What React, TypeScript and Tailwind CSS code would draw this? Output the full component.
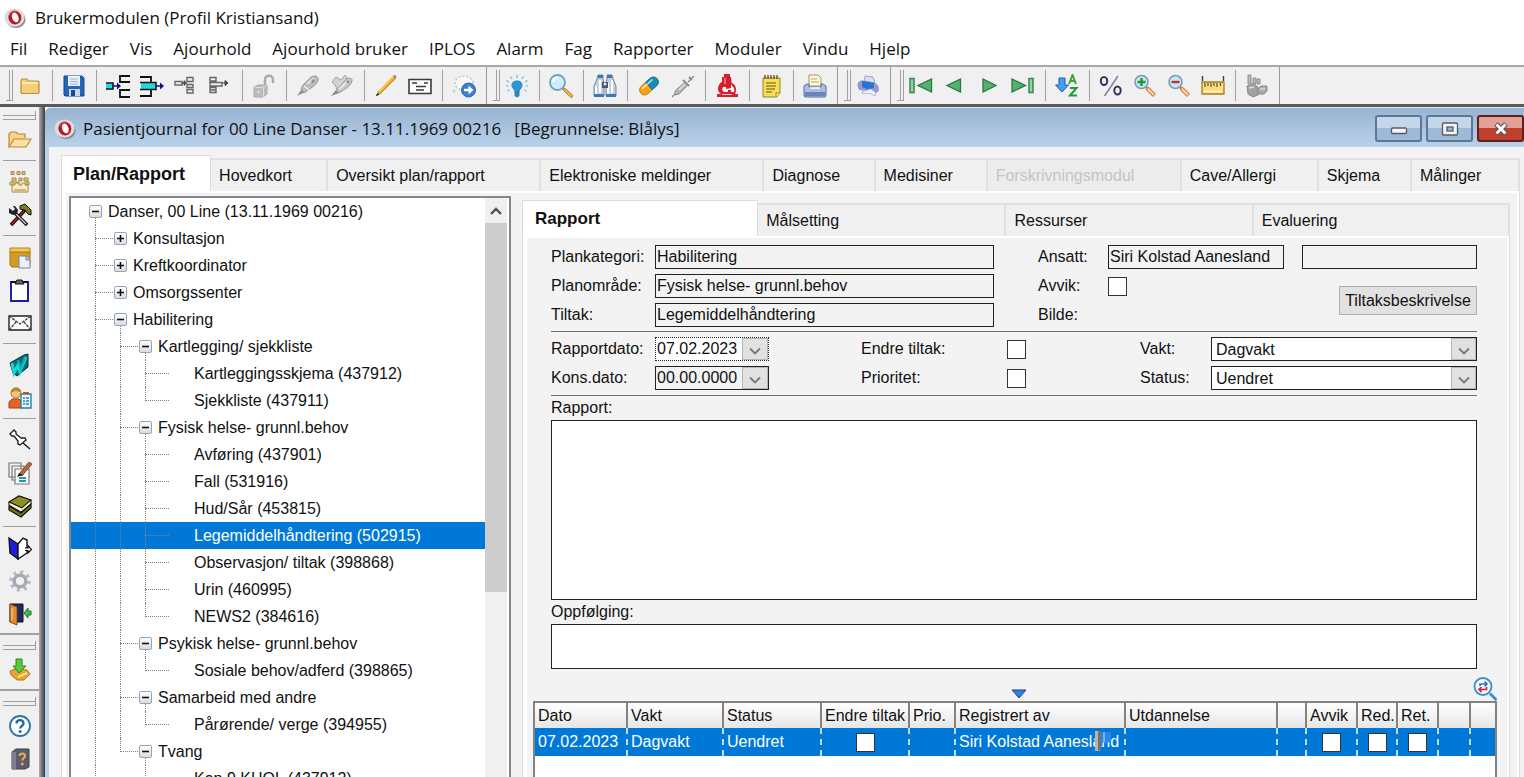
import React, { useState } from "react";

/* ---------- small drawings ---------- */

type IconProps = { children: React.ReactNode; size?: string };

function Icon({ children, size = "size-6" }: IconProps) {
  return (
    <svg viewBox="0 0 24 24" className={`${size} shrink-0`} fill="none" aria-hidden="true">
      {children}
    </svg>
  );
}

function Logo() {
  return (
    <svg viewBox="0 0 24 24" className="size-[22px] shrink-0" aria-hidden="true">
      <ellipse cx="13" cy="13.500" rx="10.500" ry="9.500" fill="#8a8a8a" />
      <ellipse cx="11.500" cy="11.500" rx="11" ry="10" fill="#dcdcdc" />
      <ellipse cx="12" cy="11.500" rx="7" ry="7.500" fill="#b81620" transform="rotate(-20 12 12)" />
      <ellipse cx="12.500" cy="11.500" rx="3.500" ry="5.500" fill="#fff" transform="rotate(-20 12 12)" />
      <path d="M5.500 9c1-4 5-5.500 8-4.500" stroke="#ea6a6a" strokeWidth="1.200" fill="none" />
    </svg>
  );
}

const folder = (
  <Icon>
    <path d="M3 18.500V6.500l1-1.500h5l1.500 2H20l1 1v10.500l-1 1H4z" fill="#f3cf79" stroke="#b98f3e" strokeWidth="1.200" />
    <path d="M4 9h16" stroke="#fff1c4" strokeWidth="1.500" />
  </Icon>
);
const save = (
  <Icon>
    <path d="M2 2h18l2 2v18H3l-1-1z" fill="#2465b8" stroke="#174a8f" />
    <path d="M6 2h12v10H6z" fill="#e8f0fa" />
    <path d="M8 5h8M8 7.500h8M8 10h8" stroke="#9db4d0" />
    <path d="M7 15h11v7H7z" fill="#c9d6e6" />
    <path d="M9 16h4v6H9z" fill="#174a8f" />
  </Icon>
);
const splitOut = (
  <svg viewBox="0 0 26 24" className="h-6 w-[26px]" fill="none" aria-hidden="true">
    <path d="M25 2H15v6h10M25 16H15v7h10" stroke="#111" strokeWidth="1.800" />
    <path d="M1 9.500h7v5H1z" fill="#23d8dc" />
    <path d="M1 9h7v6H1" stroke="#111" strokeWidth="1.500" />
    <path d="M8 12h5" stroke="#10108a" strokeWidth="1.500" />
    <path d="M12 8.500l4 3.500-4 3.500z" fill="#10108a" />
  </svg>
);
const splitIn = (
  <svg viewBox="0 0 26 24" className="h-6 w-[26px]" fill="none" aria-hidden="true">
    <path d="M1 3h11v5M1 22h11v-6" stroke="#111" strokeWidth="1.800" />
    <path d="M2 9h15v6H2z" fill="#23d8dc" />
    <path d="M1 8.500h16v7H1" stroke="#111" strokeWidth="1.500" />
    <path d="M17 12h5" stroke="#10108a" strokeWidth="1.500" />
    <path d="M21 8.500l4 3.500-4 3.500z" fill="#10108a" />
  </svg>
);
const nodeIn = (
  <Icon>
    <path d="M1 7.500h7V11H1zM13 3.500h6v4h-6zM13 10.500h6v3h-6zM13 15.500h6v3.500h-6z" stroke="#666" strokeWidth="1.400" />
    <path d="M8 9h5M10.500 6.500v5" stroke="#444" strokeWidth="1.600" />
  </Icon>
);
const nodeOut = (
  <Icon>
    <path d="M2 3.500h6v3.500H2zM2 8.500h12V12H2zM2 13.500h6V16H2zM2 16h6v2.500H2z" stroke="#666" strokeWidth="1.400" />
    <path d="M14 9h4M17 6.500l3 2.500-3 2.500z" stroke="#444" fill="#444" />
  </Icon>
);
const lock = (
  <Icon>
    <path d="M13 11V5.500c0-5 8-5 8 0V9" stroke="#a9a9a9" strokeWidth="2.400" />
    <path d="M2 13l4-2h9v9l-4 3H2z" fill="#bcbcbc" stroke="#a8a8a8" />
    <path d="M2.500 13.500h9V23M11 13l4-2" stroke="#dcdcdc" />
    <circle cx="6.500" cy="18" r="1" fill="#efefef" />
  </Icon>
);
const pen = (
  <Icon>
    <path d="M1 22l5-7 3 3z" fill="#888" />
    <path d="M5 15l2-4 8-8c3-2 8-1 7 3-1 4-4 6-7 8l-7 5z" fill="#bdbdbd" stroke="#979797" />
    <path d="M8 12l5 4M11 10l7-6" stroke="#efefef" strokeWidth="1.500" />
    <circle cx="17" cy="7" r="1.700" fill="#909090" />
  </Icon>
);
const pens = (
  <Icon>
    <path d="M1 22l5-6 3 3z" fill="#888" />
    <path d="M6 14l9-8c3-3 8-2 7 1-1 4-4 6-7 8l-6 4z" fill="#c8c8c8" stroke="#9a9a9a" />
    <path d="M2 8l4-5 5 3 4-5 2 3-5 6-5 5-2-4z" fill="#d2d2d2" stroke="#a3a3a3" />
    <path d="M9 15l8-7" stroke="#f2f2f2" strokeWidth="1.500" />
    <circle cx="18" cy="8" r="1.500" fill="#8f8f8f" />
  </Icon>
);
const pencil = (
  <Icon>
    <path d="M2 22l3-5L19 2l3 2L7 19z" fill="#f1ad34" stroke="#a9711c" strokeWidth=".8" />
    <path d="M5 17L19 2" stroke="#ffd98a" strokeWidth="1.200" />
    <path d="M2 22l1.500-3 2 1.500z" fill="#222" />
    <path d="M19 2l3 2 .5-2-1.500-1z" fill="#8c8c8c" />
  </Icon>
);
const form = (
  <Icon>
    <path d="M1 5.500h22v14H1z" fill="#fdfdfd" stroke="#3b3b3b" strokeWidth="1.600" />
    <path d="M4 9h5M8 12.500h10M8 16h8M16 9h4" stroke="#3b3b3b" strokeWidth="1.600" />
  </Icon>
);
const bubbles = (
  <svg viewBox="0 0 26 24" className="h-6 w-[26px]" fill="none" aria-hidden="true">
    <ellipse cx="13" cy="9" rx="9" ry="7" fill="#f8f8f8" stroke="#c4c4c4" strokeWidth="1.500" strokeDasharray="2 2" />
    <circle cx="3" cy="17" r="1.500" fill="#ccc" />
    <circle cx="17.500" cy="16" r="7" fill="#3a80d4" stroke="#2b66b4" />
    <path d="M13 14.700h4.500V11.500l5 4.500-5 4.500v-3.200H13z" fill="#fff" />
  </svg>
);
const bulb = (
  <Icon>
    <path d="M12 6.500c4 0 6 2.500 5.500 5.500-.3 2-2.500 3.500-3 5.500H9.500c-.5-2-2.700-3.500-3-5.500C6 9 8 6.500 12 6.500z" fill="#2e94d2" />
    <path d="M9.500 17h5v5l-2.500 1.500L9.500 22z" fill="#2a84bd" />
    <path d="M12 4V1M7 5L5.500 2.500M17 5l1.500-2.500M4 8L1.500 6.500M20 8l2.500-1.500M3.500 12H1M20.500 12H23M4.500 16l-2 1M19.500 16l2 1" stroke="#6db9e4" strokeWidth="1.200" />
  </Icon>
);
const magnifier = (
  <svg viewBox="0 0 26 26" className="size-[26px]" fill="none" aria-hidden="true">
    <path d="M15 15l3 1 7 6.500-1.500 2.500L15 17z" fill="#f0b14c" stroke="#a8702a" strokeWidth=".8" />
    <circle cx="9.500" cy="9.500" r="7.500" fill="#cdeefc" stroke="#6f9fbd" strokeWidth="1.800" />
    <path d="M5 9c0-3 2-4.500 5-4.500" stroke="#fff" strokeWidth="2" />
  </svg>
);
const binoculars = (
  <Icon>
    <path d="M5 1h5v4l1 4v13H1V12l3-7zM14 1h5l1 4 3 7v10H13V9l1-4z" fill="#c4cfe0" stroke="#5a6d8c" strokeWidth=".8" />
    <path d="M5 1h5v3H5zM14 1h5v3h-5zM1 20h10v3H1zM13 20h10v3H13z" fill="#3f78b8" />
    <path d="M3 12v8M15 9v11M7 6v13M19 6v13" stroke="#fff" strokeWidth="2" />
    <path d="M9 8h6v6H9z" fill="#4b566b" />
    <circle cx="12" cy="10" r="1.500" fill="#e0e6f0" />
  </Icon>
);
const pill = (
  <Icon>
    <g transform="rotate(-42 12 12)">
      <path d="M12 7H6a5 5 0 000 10h6z" fill="#f7a01a" stroke="#b9740a" strokeWidth=".8" />
      <path d="M12 7h6a5 5 0 010 10h-6z" fill="#1b8bb5" stroke="#0f5d80" strokeWidth=".8" />
      <path d="M5 9.500h7" stroke="#ffe0a0" strokeWidth="1.600" />
      <path d="M12 9.500h7" stroke="#9fe0f2" strokeWidth="1.600" />
    </g>
  </Icon>
);
const syringe = (
  <Icon>
    <path d="M1 23l6-6M17 8l6-6" stroke="#8b8b8b" strokeWidth="1.400" />
    <path d="M4 17l10-9 3 3-9 9-4 1z" fill="#b5b5b5" stroke="#8b8b8b" />
    <path d="M12 6l6 6M18 3l3 3" stroke="#8b8b8b" strokeWidth="2" />
    <path d="M8 16l6-6" stroke="#e6e6e6" strokeWidth="1.300" />
  </Icon>
);
const microscope = (
  <Icon>
    <path d="M9 0h6v3h1l1 8h-1v3l-5 1v-2H8l-1 3 2 2h4v-2h3v2h3c1-2 0-5-2-6V9c4 2 5 7 3 11h3v3H2v-3h4c-3-2-4-6-2-9 1-2 2-3 3-3V3h2z" fill="#d6202f" />
    <path d="M10 4v6M7 20.500h10" stroke="#f7c9cd" />
  </Icon>
);
const notepad = (
  <Icon>
    <path d="M4 4h17v15l-3 4H4z" fill="#f6df51" stroke="#9a8620" />
    <path d="M21 19h-4v4" fill="#fff6a8" stroke="#9a8620" />
    <path d="M7 9h10M7 12h10M7 15h9M7 18h6" stroke="#5d5a2a" strokeWidth="1.200" />
    <path d="M6 5V1M9 5V1M12 5V1M15 5V1M18 5V1" stroke="#5a4630" strokeWidth="1.300" />
  </Icon>
);
const printer = (
  <Icon>
    <path d="M6 12V1h9l3 3v8z" fill="#fff8dc" stroke="#9f9774" />
    <path d="M8 5h6M8 8h8" stroke="#b8a95c" />
    <path d="M1 12l3-2h2v3h12v-3h2l3 2v10l-1 1H2l-1-1z" fill="#a9bfe2" stroke="#4f6ea3" />
    <path d="M2 18h20v4H2z" fill="#6785bb" />
    <path d="M7 14h10" stroke="#fff" strokeWidth="1.500" />
  </Icon>
);
const printerBlue = (
  <Icon>
    <path d="M8 7l1-5 8 1 2 6z" fill="#dcdcf2" stroke="#a3a2cf" />
    <path d="M2 11c0-3 2-4 4-4l12 2c3 1 5 4 4 8l-3 2-4-4-8 1-4-1z" fill="#9a9ad0" stroke="#8a89c2" />
    <path d="M6 7l12 2v5c-4 2-9 1-12-1z" fill="#2176d2" />
    <path d="M6 18l9-3 5 4-1 3-6-3-6 1z" fill="#f4f4fc" stroke="#b3b2da" />
  </Icon>
);
const first = (
  <Icon>
    <path d="M1 4.500h4v14H1z" fill="#9bd0a5" stroke="#2f8a48" strokeWidth="1.500" />
    <path d="M22.500 5v13L9 11.500z" fill="#56b070" stroke="#247a3e" strokeWidth="1.300" />
  </Icon>
);
const prev = (
  <Icon>
    <path d="M17.500 5v13L4 11.500z" fill="#56b070" stroke="#247a3e" strokeWidth="1.300" />
  </Icon>
);
const next = (
  <Icon>
    <path d="M6 5v13l13-6.500z" fill="#56b070" stroke="#247a3e" strokeWidth="1.300" />
  </Icon>
);
const last = (
  <Icon>
    <path d="M1 5v13l13.500-6.500z" fill="#56b070" stroke="#247a3e" strokeWidth="1.300" />
    <path d="M18 4.500h4v14h-4z" fill="#9bd0a5" stroke="#2f8a48" strokeWidth="1.500" />
  </Icon>
);
const sortAz = (
  <Icon>
    <path d="M4 4h6v7h3.500L7 18 .5 11H4z" fill="#4c9cf0" stroke="#1d5fb8" />
    <path d="M14 10l3.500-9 3.500 9M15.500 7h4" stroke="#3aa53a" strokeWidth="2" />
    <path d="M15 14h6.500L15 21.500h7" stroke="#1f9a3a" strokeWidth="2" />
  </Icon>
);
const percent = (
  <Icon>
    <ellipse cx="5" cy="7" rx="3.200" ry="4" stroke="#39305c" strokeWidth="2" />
    <ellipse cx="18.500" cy="16.500" rx="3.200" ry="4" stroke="#39305c" strokeWidth="2" />
    <path d="M19 2L5.500 22" stroke="#8a7a9e" strokeWidth="1.500" />
  </Icon>
);
const lensBase = (
  <>
    <path d="M13 13l3 .5 6.500 6.500-2.500 2.500L13.500 16z" fill="#f2a35a" stroke="#a9682c" strokeWidth=".8" />
    <path d="M15 15l6 6" stroke="#ffe2bd" strokeWidth="1.300" />
    <circle cx="8.500" cy="8" r="6.500" fill="#c9e4f4" stroke="#7a9bb0" strokeWidth="1.500" />
  </>
);
const zoomIn = (
  <Icon>
    {lensBase}
    <path d="M8.500 4v8M4.500 8h8" stroke="#1c9a2c" strokeWidth="2.400" />
  </Icon>
);
const zoomOut = (
  <Icon>
    {lensBase}
    <path d="M4.500 8h8" stroke="#c8321e" strokeWidth="2.400" />
  </Icon>
);
const ruler = (
  <Icon>
    <path d="M1.500 2v5M22.500 2v5" stroke="#2e3d66" strokeWidth="1.400" />
    <path d="M1 8h22v12H1z" fill="#f7dd86" stroke="#a97d20" strokeWidth="1.300" />
    <path d="M4 9v4M7 9v3M10 9v4M13 9v3M16 9v4M19.500 9v3" stroke="#6b4d12" strokeWidth="1.200" />
    <path d="M3 17.500h18" stroke="#fff3c2" strokeWidth="1.500" />
  </Icon>
);
const hand = (
  <Icon>
    <path d="M3 1h3v9H3zM8 4h3v6H8zM12 5h3v5h-3z" fill="#b8b8b8" stroke="#8f8f8f" />
    <path d="M2 12l6-2 5 3v8l-5 2-5-3z" fill="#a2a2a2" stroke="#8a8a8a" />
    <path d="M13 15l3-3h6v5l-3 3h-6z" fill="#ababab" stroke="#8a8a8a" />
    <path d="M4 14l5-1M15 15h5" stroke="#dcdcdc" strokeWidth="1.400" />
  </Icon>
);

const folderOpen = (
  <Icon>
    <path d="M1 19V6l2-2h5l2 2h7v4" fill="#f7d48a" stroke="#b9893a" strokeWidth="1.200" />
    <path d="M1 19l5-8h17l-5 8z" fill="#fbe0a6" stroke="#b9893a" strokeWidth="1.200" />
  </Icon>
);
const orgFolder = (
  <Icon>
    <path d="M3 1.500h3v3H3zM9 1.500h3v3H9zM14 1.500h3v3h-3z" fill="#e3c17a" stroke="#a88a45" />
    <path d="M4 8h4v3H4zM11 8h3v3h-3zM16 8h4v3h-4zM2 12h4v3H2zM8 12h3v3H8zM18 12h3v3h-3z" fill="#e3c17a" stroke="#a88a45" />
    <path d="M4 15h3v-2h4v2h3v-2h3v2h3v7H4z" fill="#f6ecd0" stroke="#a88a45" />
    <path d="M6 20h12" stroke="#d6b56a" strokeWidth="2" />
  </Icon>
);
const tools = (
  <Icon>
    <path d="M3 22L17 7" stroke="#111" strokeWidth="3.600" />
    <path d="M3.500 21.500L16 8" stroke="#b62020" strokeWidth="1.500" />
    <path d="M12 3l5-2 6 6v5l-3-1-3-4-5-1z" fill="#7d7d18" stroke="#111" />
    <path d="M7 10l12 12" stroke="#111" strokeWidth="3.600" />
    <path d="M8 11l10 10" stroke="#cfd3d6" strokeWidth="1.300" />
    <path d="M1 5v5l4 2 4-1 1-4-3-4-2 0 2 3-2 2z" fill="#222" />
  </Icon>
);
const boxDoc = (
  <Icon>
    <path d="M2 3h20v5H2z" fill="#f5c84b" stroke="#b4831c" />
    <path d="M2 7h20v13l-2 2H4l-2-2z" fill="#d59a22" stroke="#a87614" />
    <path d="M11 11h7l4 4v8H11z" fill="#e9f0fa" stroke="#7088ad" />
    <path d="M18 11v4h4" fill="#c3d2e8" stroke="#7088ad" />
  </Icon>
);
const clipboard = (
  <Icon>
    <path d="M3 4h17v19H3z" fill="#fff" stroke="#2222c0" strokeWidth="2" />
    <path d="M3 4h17" stroke="#111" strokeWidth="2" />
    <path d="M7 6l2-4h5l2 4z" fill="#666" stroke="#111" />
    <path d="M20 4v19H3" stroke="#16167a" />
  </Icon>
);
const envelope = (
  <Icon>
    <path d="M1 5h22v14H1z" fill="#fafafa" stroke="#222" strokeWidth="1.400" />
    <path d="M1 5l11 8L23 5M1 19l7-8M23 19l-7-8" stroke="#444" strokeWidth="1.300" strokeDasharray="3 1" />
  </Icon>
);
const wordMark = (
  <Icon>
    <path d="M2 10L16 2l4-1v13L9 23l-4-3z" fill="#0a6b70" stroke="#062f31" />
    <path d="M4 10l2 10 4-8 2 7 6-15" stroke="#14d6d6" strokeWidth="3" />
    <path d="M10 7l3 9 4-12" stroke="#0fb0b4" strokeWidth="2" />
  </Icon>
);
const personList = (
  <Icon>
    <path d="M1 22v-6l3-3h7l3 3v6z" fill="#e6632a" stroke="#a83f12" />
    <circle cx="8" cy="7" r="5" fill="#f6c67e" stroke="#a86d18" />
    <path d="M3 6c0-6 10-6 10 0-3 0-5-2-6-1-1 1-3 1-4 1z" fill="#b8862a" />
    <path d="M13 8h10v14H13z" fill="#eaf5fa" stroke="#2582a8" strokeWidth="1.400" />
    <path d="M15 12h2M18 12h3M15 15h2M18 15h3M15 18h2M18 18h3" stroke="#2582a8" strokeWidth="1.300" />
    <path d="M15 7h6" stroke="#c94b3c" strokeWidth="2" />
  </Icon>
);
const pin = (
  <Icon>
    <path d="M4 8l-2-2 4-4 2 2v2l5 4h4l1 2-6 5-2-1v-3L6 8z" fill="#fff" stroke="#222" strokeWidth="1.400" />
    <path d="M15 15l7 6" stroke="#222" strokeWidth="1.600" />
  </Icon>
);
const docsPen = (
  <Icon>
    <path d="M1 2h12v14H1zM4 5h12v14H4z" fill="#f3f3f3" stroke="#777" strokeWidth="1.200" />
    <path d="M7 8h14v15H7z" fill="#fff" stroke="#777" strokeWidth="1.200" />
    <path d="M11 17h7M11 20h7" stroke="#1d9c9c" strokeWidth="1.800" />
    <path d="M11 13l10-12 3 2-10 12z" fill="#b9683a" stroke="#6f3b1d" strokeWidth=".8" />
    <path d="M9 16l2-4 4 2z" fill="#222" />
  </Icon>
);
const book = (
  <Icon>
    <path d="M1 8L11 2l12 4-9 8z" fill="#8f8f1d" stroke="#111" strokeWidth="1.200" />
    <path d="M1 8v3l12 7 10-8V6l-9 8z" fill="#f4f4e6" stroke="#111" />
    <path d="M1 12v4l12 7 10-9v-4l-10 9z" fill="#77770f" stroke="#111" strokeWidth="1.200" />
  </Icon>
);
const bookBlue = (
  <Icon>
    <path d="M1 2l9 6v15l-8-6z" fill="#1e1ee0" stroke="#111" strokeWidth="1.400" />
    <path d="M10 8l5-6 4 2v13l-9 6z" fill="#fff" stroke="#111" strokeWidth="1.400" />
    <path d="M17 12h3V9.500l3.500 4L20 17v-2.500h-3" fill="#fff" stroke="#111" strokeWidth="1.200" />
  </Icon>
);
const gear = (
  <Icon>
    <circle cx="12" cy="12" r="9" stroke="#b4b8c0" strokeWidth="3.500" strokeDasharray="3 4.070" />
    <circle cx="12" cy="12" r="5.800" fill="#f0f0f0" stroke="#a4a9b3" strokeWidth="3.400" />
  </Icon>
);
const exitDoor = (
  <Icon>
    <path d="M2 2h13v18H2z" fill="#1d2a5c" stroke="#111" />
    <path d="M2 2l7 3v18l-7-3z" fill="#e58a32" stroke="#8a4a10" />
    <path d="M4 6v12" stroke="#ffd09a" />
    <path d="M16 11l4-5v3h3v4h-3v3z" fill="#4cb848" stroke="#24762a" />
  </Icon>
);
const download = (
  <Icon>
    <path d="M2 13l5-2 12 1 3 4-6 6H9l-6-5z" fill="#e5a531" stroke="#b37716" />
    <path d="M10 19l9-4" stroke="#ffe09a" strokeWidth="2" />
    <path d="M8 1h6v7h4l-7 7-6-7h3z" fill="#57c93d" stroke="#2a8a1c" />
  </Icon>
);
const help = (
  <Icon>
    <circle cx="12" cy="12" r="10" fill="#fff" stroke="#2b74a8" strokeWidth="1.800" />
    <path d="M8.500 9.500c0-4.500 7-4.500 7 0 0 2.500-3.300 2.500-3.300 5" stroke="#1f6a9e" strokeWidth="2.400" />
    <circle cx="12.200" cy="17.500" r="1.500" fill="#1f6a9e" />
  </Icon>
);
const helpBook = (
  <Icon>
    <path d="M4 5l4-3h13v18l-4 2H4z" fill="#5c5c70" stroke="#3d3d4c" />
    <path d="M4 5h4v17H4z" fill="#7d7d92" />
    <path d="M11.500 9c0-3.500 5.500-3.500 5.500 0 0 2-2.700 2-2.700 4.500" stroke="#e8b04a" strokeWidth="2" />
    <circle cx="14.300" cy="17" r="1.400" fill="#e8b04a" />
  </Icon>
);

/* ---------- tool bars ---------- */

type Tool = [string, React.ReactNode];

const topBands: Tool[][][] = [
  [
    [["Åpne", folder]],
    [["Lagre", save]],
    [["Flytt inn", splitOut], ["Flytt ut", splitIn], ["Node inn", nodeIn], ["Node ut", nodeOut]],
    [["Lås opp", lock]],
    [["Signer", pen], ["Signer alle", pens]],
    [["Rediger", pencil], ["Skjema", form]],
    [["Send", bubbles]],
  ],
  [
    [["Tips", bulb]],
    [["Søk", magnifier]],
    [["Finn", binoculars]],
    [["Medisin", pill], ["Vaksine", syringe]],
    [["Laboratorium", microscope]],
    [["Notat", notepad]],
    [["Skriv ut", printer]],
  ],
  [[["Skriver", printerBlue]]],
  [
    [["Første", first], ["Forrige", prev], ["Neste", next], ["Siste", last]],
    [["Sorter", sortAz]],
    [["Prosent", percent], ["Zoom inn", zoomIn], ["Zoom ut", zoomOut], ["Linjal", ruler]],
    [["Verktøy", hand]],
  ],
];

const sideBands: Tool[][][] = [
  [
    [["Åpne mappe", folderOpen]],
    [["Organisasjon", orgFolder], ["Innstillinger", tools]],
    [["Arkiv", boxDoc], ["Utklipp", clipboard], ["Melding", envelope]],
    [["Dokument", wordMark], ["Person", personList]],
    [["Fest", pin], ["Dokumenter", docsPen], ["Bok", book]],
    [["Journal", bookBlue], ["Oppsett", gear], ["Avslutt", exitDoor]],
  ],
  [[["Last ned", download]]],
  [[["Hjelp", help], ["Håndbok", helpBook]]],
];

function ToolButton({ tool, side }: { tool: Tool; side?: boolean }) {
  return (
    <button
      type="button"
      aria-label={tool[0]}
      className={`flex shrink-0 items-center justify-center ${side ? "h-[33px] w-full" : "h-full w-[34px]"}`}
    >
      {tool[1]}
    </button>
  );
}

function TopToolbar() {
  return (
    <div role="toolbar" className="flex h-[39px] shrink-0 border-t-2 border-[#a8a8a8] bg-[#f0f0f0]">
      {topBands.map((band, b) => (
        <div key={b} className="flex border-r border-[#9a9a9a] pr-[5px] pl-[6px]">
          <div className="my-[3px] w-[7px] border-r border-b border-[#a0a0a0]">
            <div className="ml-[2px] h-full w-[2px] border-r border-[#a0a0a0]" />
          </div>
          {band.map((group, g) => (
            <div key={g} className="flex">
              {g > 0 && <div className="my-[3px] mr-1 ml-[5px] w-px bg-[#a0a0a0]" />}
              {group.map((t) => (
                <ToolButton key={t[0]} tool={t} />
              ))}
            </div>
          ))}
        </div>
      ))}
    </div>
  );
}

function SideToolbar() {
  return (
    <div role="toolbar" className="flex w-[39px] shrink-0 flex-col bg-[#f0f0f0]">
      {sideBands.map((band, b) => (
        <div
          key={b}
          className={`flex flex-col border-b-2 border-[#a0a0a0] px-[3px] pb-[3px] ${b === 0 ? "pt-1" : "pt-[6px]"}`}
        >
          <div className="mb-[3px] flex h-[9px] flex-col justify-end border-r border-b border-[#a0a0a0]">
            <div className="mb-[3px] h-px bg-[#a0a0a0]" />
          </div>
          {band.map((group, g) => (
            <div key={g} className="flex flex-col">
              {g > 0 && <div className="my-1 h-px bg-[#a0a0a0]" />}
              {group.map((t) => (
                <ToolButton key={t[0]} tool={t} side />
              ))}
            </div>
          ))}
        </div>
      ))}
    </div>
  );
}

/* ---------- tree ---------- */

type Row = {
  label: string;
  level: number;
  box?: "+" | "-";
  end?: boolean;
};

const rows: Row[] = [
  { label: "Danser, 00 Line (13.11.1969 00216)", level: 0, box: "-" },
  { label: "Konsultasjon", level: 1, box: "+" },
  { label: "Kreftkoordinator", level: 1, box: "+" },
  { label: "Omsorgssenter", level: 1, box: "+" },
  { label: "Habilitering", level: 1, box: "-" },
  { label: "Kartlegging/ sjekkliste", level: 2, box: "-" },
  { label: "Kartleggingsskjema (437912)", level: 3 },
  { label: "Sjekkliste (437911)", level: 3, end: true },
  { label: "Fysisk helse- grunnl.behov", level: 2, box: "-" },
  { label: "Avføring (437901)", level: 3 },
  { label: "Fall (531916)", level: 3 },
  { label: "Hud/Sår (453815)", level: 3 },
  { label: "Legemiddelhåndtering (502915)", level: 3 },
  { label: "Observasjon/ tiltak (398868)", level: 3 },
  { label: "Urin (460995)", level: 3 },
  { label: "NEWS2 (384616)", level: 3, end: true },
  { label: "Psykisk helse- grunnl.behov", level: 2, box: "-" },
  { label: "Sosiale behov/adferd (398865)", level: 3, end: true },
  { label: "Samarbeid med andre", level: 2, box: "-" },
  { label: "Pårørende/ verge (394955)", level: 3, end: true },
  { label: "Tvang", level: 2, box: "-", end: true },
  { label: "Kap 9 KHOL (437912)", level: 3 },
];

function Guide({ column, row, index }: { column: number; row: Row; index: number }) {
  const isBranch = column === row.level - 1;
  const pastTvang = index > 20 && column === 1;
  return (
    <span className="relative h-full w-[25px] shrink-0">
      {!pastTvang && (
        <span
          className={`absolute top-0 left-3 border-l border-dotted border-[#808080] ${
            isBranch && row.end ? "h-1/2" : "h-full"
          }`}
        />
      )}
      {isBranch && (
        <span
          className={`absolute top-[13px] left-3 border-t border-dotted border-[#808080] ${
            row.level === 3 ? "w-6" : "w-5"
          }`}
        />
      )}
    </span>
  );
}

function Expander({ sign, below }: { sign: "+" | "-"; below: boolean }) {
  return (
    <span className="relative flex h-full w-[25px] shrink-0 items-center justify-center">
      {below && <span className="absolute bottom-0 left-3 h-2 border-l border-dotted border-[#808080]" />}
      <button
        type="button"
        aria-label={sign === "+" ? "Utvid" : "Skjul"}
        className="relative size-[13px] rounded-[2px] border border-[#8fa5bb] bg-linear-to-b from-white to-[#dcdcdc]"
      >
        <svg viewBox="0 0 11 11" className="size-[11px]" aria-hidden="true">
          <path d={sign === "+" ? "M2 5.500h7M5.500 2v7" : "M2 5.500h7"} stroke="#111" strokeWidth="1.600" />
        </svg>
      </button>
    </span>
  );
}

function Tree() {
  const [selected, setSelected] = useState(12);
  return (
    <div className="flex w-[442px] shrink-0 overflow-hidden border-2 border-b-0 border-[#828790] bg-white">
      <div role="tree" className="min-w-0 flex-1">
        {rows.map((row, i) => (
          <div
            key={row.label}
            role="treeitem"
            aria-selected={i === selected}
            onClick={() => setSelected(i)}
            className={`flex h-[27px] items-center pl-3 whitespace-nowrap ${
              i === selected ? "bg-[#0078d7] text-white" : ""
            }`}
          >
            {Array.from({ length: row.level }, (_, c) => (
              <Guide key={c} column={c} row={row} index={i} />
            ))}
            {row.box && <Expander sign={row.box} below={row.box === "-"} />}
            <span className={row.level === 3 ? "pl-9" : ""}>{row.label}</span>
          </div>
        ))}
      </div>
      <div className="mr-[2px] flex w-[22px] shrink-0 flex-col bg-[#f0f0f0]">
        <button type="button" aria-label="Rull opp" className="flex h-[25px] items-center justify-center">
          <svg viewBox="0 0 14 14" className="size-3.5" aria-hidden="true">
            <path d="M2 10l5-5 5 5" fill="none" stroke="#505050" strokeWidth="2.400" />
          </svg>
        </button>
        <div className="h-[369px] bg-[#cdcdcd]" />
      </div>
    </div>
  );
}

/* ---------- form ---------- */

const fieldStyle = "h-6 w-full min-w-0 border border-[#222] px-px outline-none";

function Arrow() {
  return (
    <svg viewBox="0 0 14 14" className="mt-1 size-3.5" aria-hidden="true">
      <path d="M2 4.500l5 5 5-5" fill="none" stroke="#777" strokeWidth="1.800" />
    </svg>
  );
}

function ReadField({ id, label, value }: { id: string; label: string; value: string }) {
  return (
    <div className="flex h-6 items-center">
      <label htmlFor={id} className="w-[104px] shrink-0">
        {label}
      </label>
      <input id={id} readOnly value={value} className={`${fieldStyle} bg-[#f3f3f3]`} />
    </div>
  );
}

function DateField({ id, value, focused }: { id: string; value: string; focused?: boolean }) {
  return (
    <div
      className={`flex h-6 w-[114px] border ${
        focused ? "border-dotted border-[#222] bg-white" : "border-[#222] bg-[#f3f3f3]"
      }`}
    >
      <input id={id} defaultValue={value} className="w-[86px] min-w-0 bg-transparent px-px outline-none" />
      <button type="button" aria-label="Velg dato" className="flex flex-1 items-center justify-center border border-[#b5b5b5] bg-[#e1e1e1]">
        <Arrow />
      </button>
    </div>
  );
}

function SelectField({ id, value }: { id: string; value: string }) {
  return (
    <div className="relative h-6">
      <select id={id} className="block h-6 w-full appearance-none border border-[#222] bg-white pl-1 outline-none">
        <option>{value}</option>
      </select>
      <span className="pointer-events-none absolute inset-y-px right-px flex w-[25px] items-center justify-center border border-[#b5b5b5] bg-[#e1e1e1]">
        <Arrow />
      </span>
    </div>
  );
}

function Check({ id, label }: { id?: string; label?: string }) {
  return (
    <input
      id={id}
      aria-label={label}
      type="checkbox"
      className="block size-[19px] shrink-0 appearance-none border border-[#333] bg-white checked:bg-[#0078d7]"
    />
  );
}

const headings = ["Dato", "Vakt", "Status", "Endre tiltak", "Prio.", "Registrert av", "Utdannelse", "", "Avvik", "Red.", "Ret.", "", ""];
const checkColumns = [3, 8, 9, 10];
const cells = ["07.02.2023", "Dagvakt", "Uendret", "", "", "Siri Kolstad Aanesland", "", "", "", "", "", "", ""];

function ReportTable() {
  return (
    <div className="mr-[10px] ml-[6px] flex-1 border-2 border-b-0 border-[#828282] bg-white">
      <table className="w-full table-fixed border-collapse">
        <colgroup>
          <col className="w-[92px]" />
          <col className="w-[96px]" />
          <col className="w-[98px]" />
          <col className="w-[88px]" />
          <col className="w-[46px]" />
          <col className="w-[170px]" />
          <col />
          <col className="w-[29px]" />
          <col className="w-[51px]" />
          <col className="w-[40px]" />
          <col className="w-[41px]" />
          <col className="w-[32px]" />
          <col className="w-[25px]" />
        </colgroup>
        <thead>
          <tr className="h-[25px]">
            {headings.map((h, i) => (
              <th
                key={i}
                className={`border-[#828282] bg-linear-to-b from-white to-[#e6e6e6] px-[3px] text-left font-normal whitespace-nowrap ${
                  i < 12 ? "border-r-2" : ""
                }`}
              >
                {h}
              </th>
            ))}
          </tr>
        </thead>
        <tbody>
          <tr className="h-7 bg-[#0078d7] text-white">
            {cells.map((c, i) => (
              <td
                key={i}
                className={`border-dashed border-[#c7dcf0] px-[3px] whitespace-nowrap ${i < 12 ? "border-r-2" : ""}`}
              >
                {checkColumns.includes(i) ? (
                  <div className="flex justify-center">
                    <Check label={headings[i]} />
                  </div>
                ) : i === 5 ? (
                  <div className="relative">
                    {c}
                    <svg viewBox="0 0 18 22" className="absolute top-0 left-[135px] h-[22px] w-[18px]" aria-hidden="true">
                      <path d="M1 1h5v20H1z" fill="#b9b4ae" />
                      <path d="M4 1h3v18l-3 2z" fill="#77716c" />
                      <path d="M7 2c4 2 7-1 10 0v9c-3 1-4 4-6 2l-4-1z" fill="#2f86ea" />
                      <path d="M10 2v10" stroke="#8cc0ff" strokeWidth="1.500" />
                    </svg>
                  </div>
                ) : (
                  c
                )}
              </td>
            ))}
          </tr>
        </tbody>
      </table>
    </div>
  );
}

function ReportPanel() {
  return (
    <div className="flex flex-1 flex-col border-x border-[#dcdcdc]">
      <div className="flex flex-1 flex-col border-t-2 border-r-2 border-l-4 border-white bg-[#f3f3f3] pt-[7px]">
        <div className="mr-[30px] ml-6 flex flex-col">
          <div className="flex pb-1">
            <div className="flex w-[443px] shrink-0 flex-col gap-[5px]">
              <ReadField id="kategori" label="Plankategori:" value="Habilitering" />
              <ReadField id="omrade" label="Planområde:" value="Fysisk helse- grunnl.behov" />
              <ReadField id="tiltak" label="Tiltak:" value="Legemiddelhåndtering" />
            </div>
            <div className="ml-11 flex flex-1 flex-col gap-[5px]">
              <div className="flex h-6 items-center">
                <label htmlFor="ansatt" className="w-[70px] shrink-0">
                  Ansatt:
                </label>
                <div className="flex flex-1 gap-[18px]">
                  <input id="ansatt" readOnly value="Siri Kolstad Aanesland" className={`${fieldStyle} bg-[#f3f3f3]`} />
                  <input aria-label="Ansatt, tillegg" readOnly value="" className={`${fieldStyle} bg-[#f3f3f3]`} />
                </div>
              </div>
              <div className="flex">
                <div className="flex flex-1 flex-col gap-[5px]">
                  <div className="flex h-6 items-center">
                    <label htmlFor="avvik" className="w-[70px] shrink-0">
                      Avvik:
                    </label>
                    <Check id="avvik" />
                  </div>
                  <div className="flex h-6 items-center">Bilde:</div>
                </div>
                <button type="button" className="mt-3 h-[29px] w-[138px] border border-[#adadad] bg-[#e1e1e1]">
                  Tiltaksbeskrivelse
                </button>
              </div>
            </div>
          </div>
          <div className="grid grid-cols-[104px_206fr_146px_133fr_71px_266fr] items-center gap-y-[5px] border-y border-[#6b6f80] py-[5px]">
            <label htmlFor="rapportdato">Rapportdato:</label>
            <DateField id="rapportdato" value="07.02.2023" focused />
            <label htmlFor="endre">Endre tiltak:</label>
            <Check id="endre" />
            <label htmlFor="vakt">Vakt:</label>
            <SelectField id="vakt" value="Dagvakt" />
            <label htmlFor="kons">Kons.dato:</label>
            <DateField id="kons" value="00.00.0000" />
            <label htmlFor="prio">Prioritet:</label>
            <Check id="prio" />
            <label htmlFor="status">Status:</label>
            <SelectField id="status" value="Uendret" />
          </div>
          <label htmlFor="rapport" className="h-6">
            Rapport:
          </label>
          <textarea id="rapport" className="h-[180px] w-full resize-none border border-[#222] bg-white outline-none" />
          <label htmlFor="oppfolging" className="h-6">
            Oppfølging:
          </label>
          <textarea id="oppfolging" className="h-[45px] w-full resize-none border border-[#222] bg-white outline-none" />
        </div>
        <div className="mr-[10px] ml-[6px] flex h-8 items-end justify-end">
          <button type="button" aria-label="Vis liste" className="mx-auto mb-0.5 pl-8">
            <svg viewBox="0 0 16 10" className="h-2.5 w-4" aria-hidden="true">
              <path d="M1 1h14L8 9z" fill="#2e7fe0" stroke="#173f94" />
            </svg>
          </button>
          <button type="button" aria-label="Søk i rapporter">
            <svg viewBox="0 0 24 24" className="size-6" fill="none" aria-hidden="true">
              <path d="M17 16.500l6.500 6.500" stroke="#3b8fd0" strokeWidth="3" />
              <circle cx="10" cy="9.500" r="8.500" fill="#f6fafd" stroke="#3b8fd0" strokeWidth="1.800" />
              <path d="M7 9V7h6M11.500 4.500L14 7l-2.500 2.500" stroke="#2e78c0" strokeWidth="1.700" />
              <path d="M13.500 10v2.500H7M8.500 10L6 12.500 8.500 15" stroke="#e01f2d" strokeWidth="1.700" />
            </svg>
          </button>
        </div>
        <ReportTable />
      </div>
    </div>
  );
}

/* ---------- window ---------- */

function Tab({ children, disabled }: { children: string; disabled?: boolean }) {
  return (
    <button
      type="button"
      role="tab"
      disabled={disabled}
      className="mt-[3px] min-w-0 border-t-2 border-r-2 border-[#e0e0e0] bg-[#f0f0f0] pl-2 text-left whitespace-nowrap disabled:bg-[#ececec] disabled:text-[#c4c4c4]"
    >
      {children}
    </button>
  );
}

function PatientWindow() {
  return (
    <section className="flex min-w-0 flex-1 flex-col rounded-tl-md border-l-4 border-[#b9d1ea] bg-[#f3f3f3]">
      <header className="-ml-1 flex h-10 shrink-0 items-center rounded-tl-md border-t border-[#dfe9f3] bg-linear-to-b from-[#98b4d2] to-[#b9d1ea] pt-0.5 pl-[9px]">
        <Logo />
        <h1 className="ml-[7px] flex-1 font-['Open_Sans',sans-serif] text-[17px] whitespace-pre">
          {"Pasientjournal for 00 Line Danser - 13.11.1969 00216   [Begrunnelse: Blålys]"}
        </h1>
        <div className="flex gap-1">
          <button type="button" aria-label="Minimer" className="flex h-[27px] w-[47px] items-center justify-center rounded-[3px] border-2 border-[#5d7693] bg-linear-to-b from-[#c4d6ea] from-50% to-[#9db9d8] to-50%">
            <svg viewBox="0 0 18 12" className="h-3 w-[18px]" aria-hidden="true">
              <rect x="1.500" y="5" width="15" height="5.500" rx="1" fill="#f4f4f4" stroke="#555c66" strokeWidth="1.300" />
            </svg>
          </button>
          <button type="button" aria-label="Maksimer" className="flex h-[27px] w-[47px] items-center justify-center rounded-[3px] border-2 border-[#5d7693] bg-linear-to-b from-[#c4d6ea] from-50% to-[#9db9d8] to-50%">
            <svg viewBox="0 0 18 14" className="h-3.5 w-[18px]" aria-hidden="true">
              <rect x="1.500" y="1" width="15" height="12" rx="1" fill="#f4f4f4" stroke="#555c66" strokeWidth="1.300" />
              <rect x="6" y="5" width="6" height="4" fill="#9db9d8" stroke="#555c66" strokeWidth="1.300" />
            </svg>
          </button>
          <button type="button" aria-label="Lukk" className="flex h-[27px] w-[47px] items-center justify-center rounded-[3px] border-2 border-[#5b1f24] bg-linear-to-b from-[#e3a095] from-50% to-[#c0402b] to-50%">
            <svg viewBox="0 0 18 14" className="h-3.5 w-[18px]" aria-hidden="true">
              <path d="M4 2l10 10M14 2L4 12" stroke="#4c4c58" strokeWidth="5" />
              <path d="M4.500 2.500l9 9M13.500 2.500l-9 9" stroke="#fff" strokeWidth="3" />
            </svg>
          </button>
        </div>
      </header>

      <div className="flex min-h-0 flex-1 flex-col pt-[8px] pr-1 pl-3">
        <div role="tablist" className="grid h-9 shrink-0 grid-cols-[150fr_117fr_213fr_223fr_111fr_112fr_194fr_137fr_93fr_108fr]">
          <button type="button" role="tab" aria-selected="true" className="border-x border-t border-[#dcdcdc] bg-white pl-[11px] text-left text-[18px] font-bold">
            Plan/Rapport
          </button>
          <Tab>Hovedkort</Tab>
          <Tab>Oversikt plan/rapport</Tab>
          <Tab>Elektroniske meldinger</Tab>
          <Tab>Diagnose</Tab>
          <Tab>Medisiner</Tab>
          <Tab disabled>Forskrivningsmodul</Tab>
          <Tab>Cave/Allergi</Tab>
          <Tab>Skjema</Tab>
          <Tab>Målinger</Tab>
        </div>
        <div className="flex min-h-0 flex-1 border-x border-[#dcdcdc]">
          <div className="flex min-h-0 flex-1 border-t-2 border-r-2 border-l-4 border-white bg-[#f3f3f3] pt-[3px] pr-[7px] pl-[3px]">
            <Tree />
            <div className="ml-[11px] flex min-w-0 flex-1 flex-col pt-1">
              <div role="tablist" className="grid h-9 shrink-0 grid-cols-[236fr_248fr_247fr_256fr]">
                <button type="button" role="tab" aria-selected="true" className="border-x border-t border-[#dcdcdc] bg-white pl-3 text-left text-[17px] font-bold">
                  Rapport
                </button>
                <Tab>Målsetting</Tab>
                <Tab>Ressurser</Tab>
                <Tab>Evaluering</Tab>
              </div>
              <ReportPanel />
            </div>
          </div>
        </div>
      </div>
    </section>
  );
}

const menus = ["Fil", "Rediger", "Vis", "Ajourhold", "Ajourhold bruker", "IPLOS", "Alarm", "Fag", "Rapporter", "Moduler", "Vindu", "Hjelp"];

export default function App() {
  return (
    <div className="flex h-screen flex-col overflow-hidden bg-white font-['Liberation_Sans',Arial,sans-serif] text-[16px] leading-6 text-[#111]">
      <div className="flex h-9 shrink-0 items-center gap-[9px] pl-1 font-['Open_Sans',sans-serif] text-[17px]">
        <Logo />
        <span>Brukermodulen (Profil Kristiansand)</span>
      </div>
      <nav className="flex h-[29px] shrink-0 items-center gap-[21px] pb-1 pl-[10px] font-['Open_Sans',sans-serif] text-[17px]">
        {menus.map((m) => (
          <button key={m} type="button">
            {m}
          </button>
        ))}
      </nav>
      <TopToolbar />
      <div className="flex min-h-0 flex-1 border-t-[3px] border-[#5a5a5a]">
        <SideToolbar />
        <div className="w-[6px] shrink-0 bg-linear-to-r from-[#b0b0b0] to-[#3c3c3c]" />
        <PatientWindow />
      </div>
    </div>
  );
}
